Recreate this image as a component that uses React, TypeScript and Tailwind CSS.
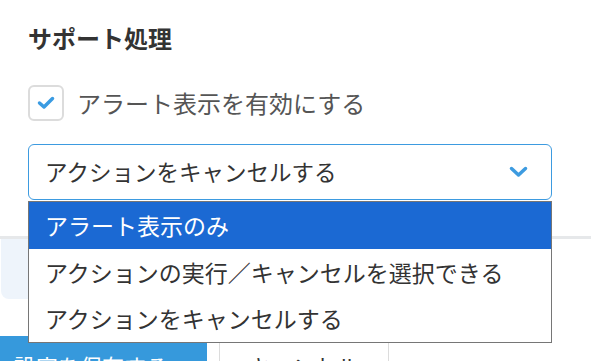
import React from "react";

const font = { fontFamily: '"Noto Sans CJK JP", "Noto Sans", sans-serif' };

export default function App() {
  const options = [
    "アラート表示のみ",
    "アクションの実行／キャンセルを選択できる",
    "アクションをキャンセルする",
  ];

  return (
    <div className="relative w-[591px] h-[361px] overflow-hidden bg-white" style={font}>
      <div className="pl-[28px] pt-[20px]">
        <h2 className="text-[24px] leading-[36px] font-bold text-[#333]">サポート処理</h2>

        <label className="mt-[29px] flex items-center gap-[13px]">
          <span className="grid h-[36px] w-[36px] place-items-center rounded-[6px] border-2 border-[#dcdcdc] bg-white">
            <svg width="18" height="14" viewBox="0 0 18 14" fill="none">
              <polyline
                points="2.5,7 7,11 15.5,2.5"
                stroke="#3a9be2"
                strokeWidth="3.5"
                strokeLinecap="round"
                strokeLinejoin="round"
              />
            </svg>
          </span>
          <span className="text-[24px] leading-[36px] text-[#555]">アラート表示を有効にする</span>
        </label>

        <div className="relative mt-[23px] w-[524px]">
          <div className="flex h-[56px] items-center justify-between rounded-[6px] border border-[#3d9be0] pl-[16px] pr-[23px]">
            <span className="text-[22.5px] text-[#333]">アクションをキャンセルする</span>
            <svg width="19" height="12" viewBox="0 0 19 12" fill="none">
              <polyline
                points="2.5,2.5 9.5,9 16.5,2.5"
                stroke="#3d9be0"
                strokeWidth="3.5"
                strokeLinecap="round"
                strokeLinejoin="round"
              />
            </svg>
          </div>

          <ul className="absolute left-0 top-[57px] z-10 w-[524px] border border-[#767676] bg-white">
            {options.map((o, i) => (
              <li
                key={i}
                className={
                  "flex h-[46.5px] items-center pl-[16px] text-[23px] " +
                  (i === 0 ? "bg-[#1b69d3] text-white" : "text-[#333]")
                }
              >
                {o}
              </li>
            ))}
          </ul>
        </div>
      </div>

      <div className="mt-[36px] border-t-[3px] border-[#e6e8ea]">
        <div className="ml-[1px] h-[60px] w-[545px] rounded-b-[8px] bg-[#eef4fb]" />
      </div>

      <div className="mt-[37px] flex gap-[12px]">
        <button className="h-[46px] w-[207px] bg-[#3699dc] pl-[14px] pt-[12px] text-left text-[22px] text-white">
          設定を保存する
        </button>
        <button className="h-[46px] w-[170px] border border-[#dcdcdc] bg-white pt-[12px] text-[22px] text-[#333]">
          キャンセル
        </button>
      </div>
    </div>
  );
}
